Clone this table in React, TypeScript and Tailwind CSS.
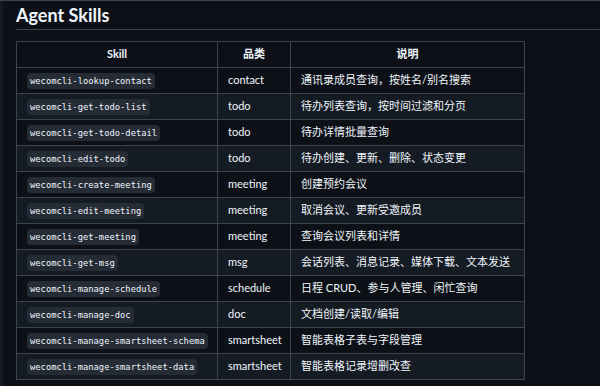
const rows: [string, string, string][] = [
  ['wecomcli-lookup-contact', 'contact', '通讯录成员查询，按姓名/别名搜索'],
  ['wecomcli-get-todo-list', 'todo', '待办列表查询，按时间过滤和分页'],
  ['wecomcli-get-todo-detail', 'todo', '待办详情批量查询'],
  ['wecomcli-edit-todo', 'todo', '待办创建、更新、删除、状态变更'],
  ['wecomcli-create-meeting', 'meeting', '创建预约会议'],
  ['wecomcli-edit-meeting', 'meeting', '取消会议、更新受邀成员'],
  ['wecomcli-get-meeting', 'meeting', '查询会议列表和详情'],
  ['wecomcli-get-msg', 'msg', '会话列表、消息记录、媒体下载、文本发送'],
  ['wecomcli-manage-schedule', 'schedule', '日程 CRUD、参与人管理、闲忙查询'],
  ['wecomcli-manage-doc', 'doc', '文档创建/读取/编辑'],
  ['wecomcli-manage-smartsheet-schema', 'smartsheet', '智能表格子表与字段管理'],
  ['wecomcli-manage-smartsheet-data', 'smartsheet', '智能表格记录增删改查'],
];

export default function App() {
  return (
    <div
      className="w-[600px] h-[386px] overflow-hidden bg-[#0d1117] border-t border-[#3d444d] flex text-[#f0f6fc]"
      style={{ fontFamily: 'Lato, "Noto Sans CJK SC", sans-serif' }}
    >
      <div className="w-[3px] shrink-0 bg-[#151b23]" />
      <div className="flex-1 pl-[13px]">
        <h2 className="text-[18px] font-bold leading-[26px] pt-[1px] pb-[1px] border-b border-[#3d444d]">
          Agent Skills
        </h2>
        <table className="mt-[11px] border-collapse text-[11px] table-fixed w-[508px]">
          <colgroup>
            <col className="w-[201px]" />
            <col className="w-[73px]" />
            <col className="w-[234px]" />
          </colgroup>
          <thead>
            <tr className="h-[26px]">
              {['Skill', '品类', '说明'].map((h) => (
                <th key={h} className="border border-[#3d444d] font-bold text-center px-[10px]">
                  {h}
                </th>
              ))}
            </tr>
          </thead>
          <tbody>
            {rows.map(([skill, cat, desc], i) => (
              <tr key={skill} className={`h-[26px] ${i % 2 === 1 ? 'bg-[#151b23]' : 'bg-[#0d1117]'}`}>
                <td className="border border-[#3d444d] pl-[10px] pr-1 whitespace-nowrap">
                  <code
                    className="inline-block rounded-[4px] bg-[#262c36] px-[3px] leading-[16px] text-[8.8px] text-[#f0f6fc]"
                    style={{ fontFamily: '"DejaVu Sans Mono", "Liberation Mono", monospace' }}
                  >
                    {skill}
                  </code>
                </td>
                <td className="border border-[#3d444d] px-[10px] whitespace-nowrap">{cat}</td>
                <td className="border border-[#3d444d] px-[10px] whitespace-nowrap">{desc}</td>
              </tr>
            ))}
          </tbody>
        </table>
      </div>
    </div>
  );
}
